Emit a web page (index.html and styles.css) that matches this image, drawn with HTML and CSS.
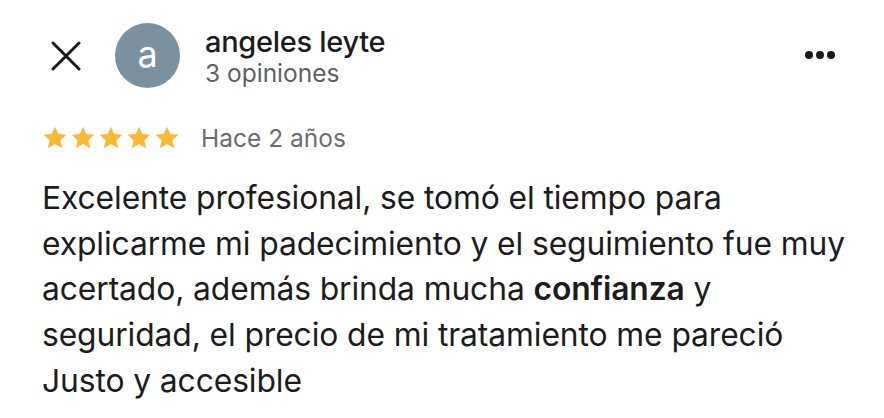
FILE: index.html
```html
<!DOCTYPE html>
<html lang="es">
<head>
<meta charset="utf-8">
<link rel="stylesheet" href="styles.css">
</head>
<body>
<div class="review">
  <div class="header">
    <button class="close" aria-label="Cerrar">
      <svg width="30" height="30" viewBox="0 0 30 30"><path d="M2 2 L28 28 M28 2 L2 28" stroke="#1a1a1a" stroke-width="3" stroke-linecap="round"/></svg>
    </button>
    <div class="avatar">a</div>
    <div class="who">
      <div class="name">angeles leyte</div>
      <div class="count">3 opiniones</div>
    </div>
    <div class="more" aria-label="Más"><span></span><span></span><span></span></div>
  </div>
  <div class="meta">
    <div class="stars">
      <svg viewBox="0 0 24 24" class="star"><path d="M12 1.5l3.1 6.9 7.4.7-5.6 5 1.7 7.4L12 17.6 5.4 21.5l1.7-7.4-5.6-5 7.4-.7z"/></svg>
      <svg viewBox="0 0 24 24" class="star"><path d="M12 1.5l3.1 6.9 7.4.7-5.6 5 1.7 7.4L12 17.6 5.4 21.5l1.7-7.4-5.6-5 7.4-.7z"/></svg>
      <svg viewBox="0 0 24 24" class="star"><path d="M12 1.5l3.1 6.9 7.4.7-5.6 5 1.7 7.4L12 17.6 5.4 21.5l1.7-7.4-5.6-5 7.4-.7z"/></svg>
      <svg viewBox="0 0 24 24" class="star"><path d="M12 1.5l3.1 6.9 7.4.7-5.6 5 1.7 7.4L12 17.6 5.4 21.5l1.7-7.4-5.6-5 7.4-.7z"/></svg>
      <svg viewBox="0 0 24 24" class="star"><path d="M12 1.5l3.1 6.9 7.4.7-5.6 5 1.7 7.4L12 17.6 5.4 21.5l1.7-7.4-5.6-5 7.4-.7z"/></svg>
    </div>
    <span class="when">Hace 2 años</span>
  </div>
  <p class="text">Excelente profesional, se tomó el tiempo para explicarme mi padecimiento y el seguimiento fue muy acertado, además brinda mucha <b>confianza</b> y seguridad, el precio de mi tratamiento me pareció Justo y accesible</p>
</div>
</body>
</html>
```
FILE: styles.css
```css
html, body { margin: 0; padding: 0; background: #fff; }
body { font-family: Inter, "Noto Sans", sans-serif; color: #1c1c1e; width: 884px; height: 418px; overflow: hidden; }
.review { padding: 23px 0 0 42px; }
.header { display: flex; align-items: center; height: 65px; }
.close { width: 30px; height: 30px; padding: 0; margin: 0 0 0 9px; border: 0; background: none; display: flex; }
.avatar { width: 65px; height: 65px; border-radius: 50%; background: #7b91a0; color: #fff; font-size: 36px; display: flex; align-items: center; justify-content: center; margin-left: 34px; line-height: 1; padding-bottom: 4px; box-sizing: border-box; }
.who { margin-left: 25px; flex: 1; align-self: flex-start; padding-top: 2px; }
.name { font-size: 29px; font-weight: 500; color: #1c1c1e; line-height: 34px; letter-spacing: -0.3px; }
.count { font-size: 24.5px; color: #5f5f64; line-height: 30px; margin-top: -1px; }
.more { display: flex; gap: 3px; margin-right: 49px; margin-top: -2px; }
.more span { width: 8px; height: 8px; border-radius: 50%; background: #1a1a1a; }
.meta { display: flex; align-items: center; margin-top: 37px; height: 26px; }
.stars { display: flex; gap: 2px; }
.star { width: 26px; height: 26px; fill: #f9b935; }
.when { margin-left: 21px; font-size: 24.5px; color: #6b6b70; }
.text { margin: 24px 0 0; font-size: 31.8px; line-height: 45.7px; color: #1c1c1e; width: 830px; letter-spacing: -0.1px; }
.text b { font-weight: 600; }
```
